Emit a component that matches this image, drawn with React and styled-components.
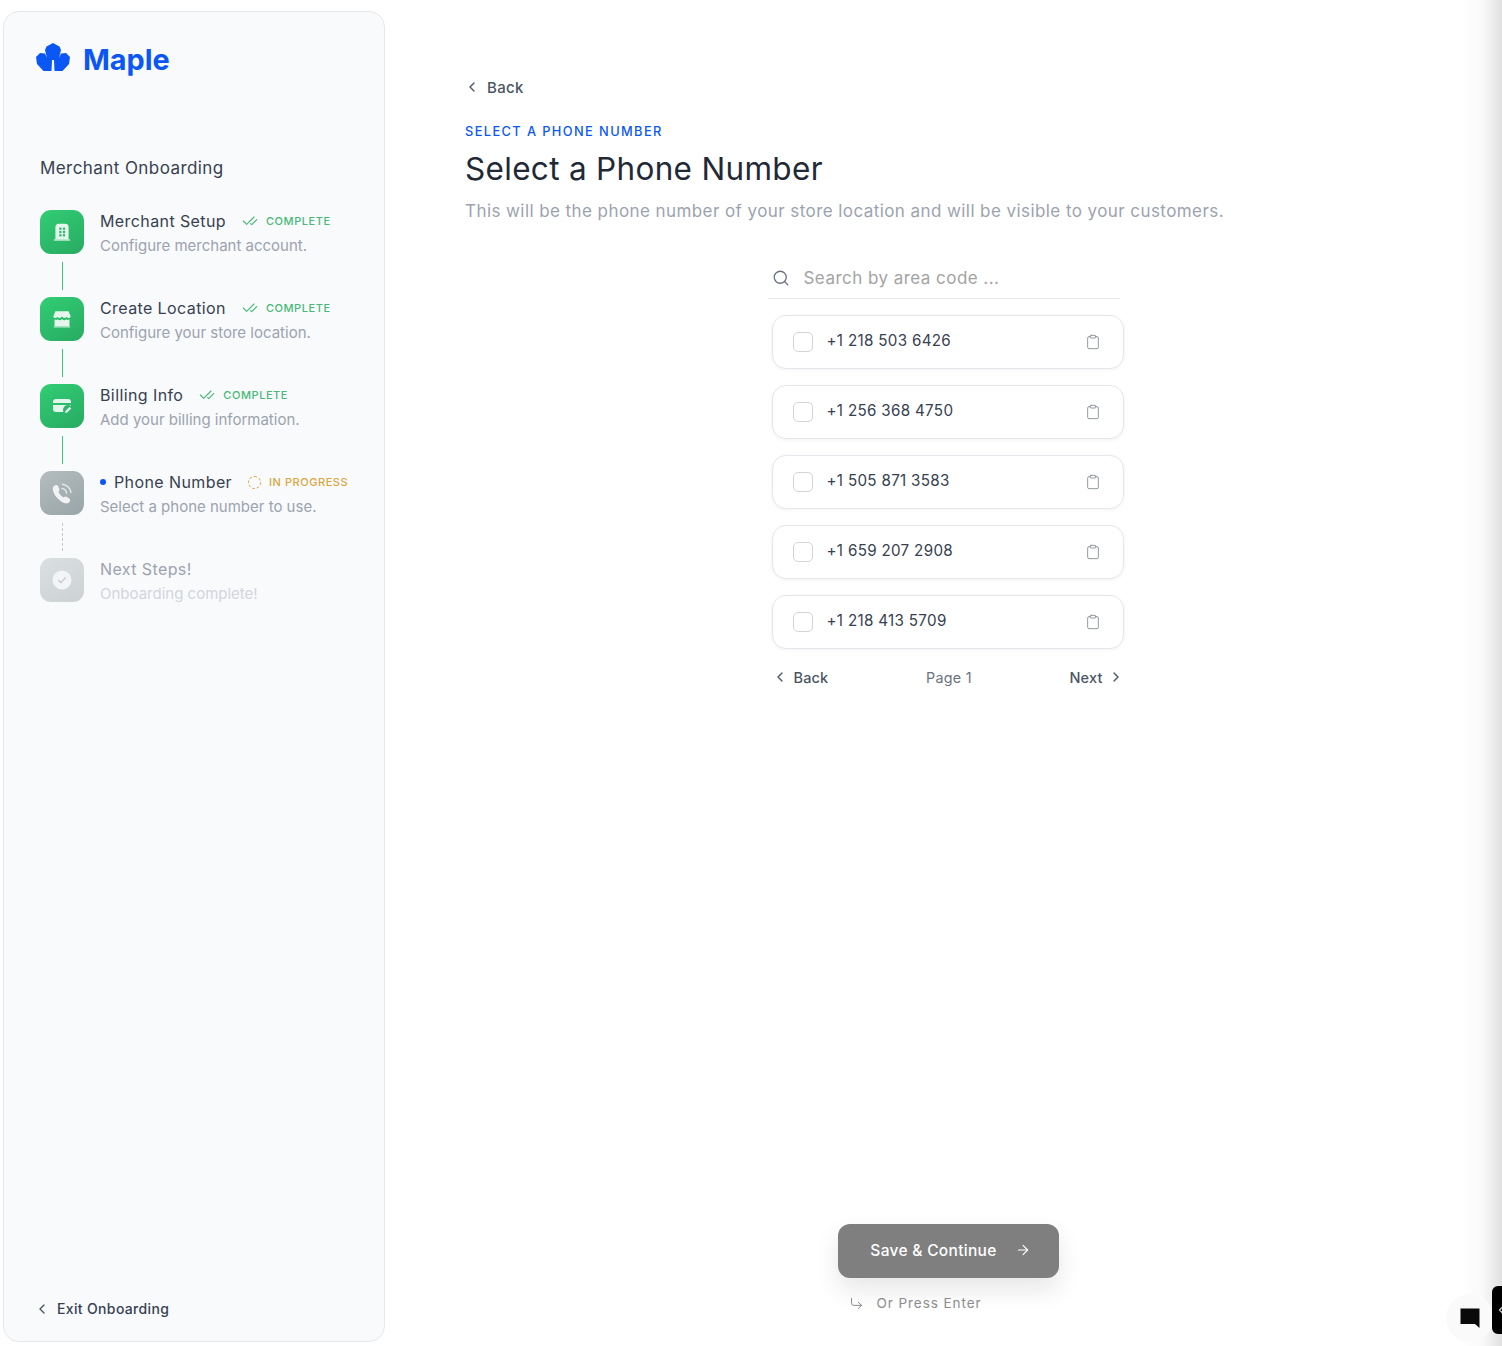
import React from "react";
import styled, { createGlobalStyle } from "styled-components";
import { ArrowRight, CheckCheck, ChevronLeft, ChevronRight, Clipboard, CornerDownRight, Search } from "lucide-react";

const GlobalStyle = createGlobalStyle`
  * { box-sizing: border-box; }
  html, body { margin: 0; background: #fff; }
  body { font-family: Inter, "Liberation Sans", sans-serif; overflow: hidden; }
`;

const Page = styled.div`
  display: flex;
  height: 1346px;
  padding: 11px 0 4px 3px;
`;

const Sidebar = styled.aside`
  width: 382px;
  flex: none;
  display: flex;
  flex-direction: column;
  padding: 30px 0 24px 36px;
  background: #f9fafc;
  border: 1px solid #e5e7eb;
  border-radius: 16px;
`;

const Logo = styled.div`
  display: flex;
  align-items: center;
  gap: 13px;
  margin-left: -4px;
  height: 34px;
  color: #0b57f5;
  font-size: 28.8px;
  font-weight: 700;
  svg { margin-top: -3px; }
`;

const OnboardingTitle = styled.h2`
  margin: 79px 0 0;
  font-size: 17px;
  line-height: 26px;
  font-weight: 400;
  letter-spacing: 0.025em;
  color: #374151;
`;

const Steps = styled.div`
  margin-top: 29px;
  display: flex;
  flex-direction: column;
  flex: 1;
`;

const Step = styled.div`
  display: flex;
  gap: 16px;
  height: 44px;
`;

const StepIcon = styled.div`
  width: 44px;
  height: 44px;
  flex: none;
  display: flex;
  align-items: center;
  justify-content: center;
  border-radius: 11px;
  background: ${(p) =>
    p.$kind === "done"
      ? "linear-gradient(150deg, #32cd74, #27ab62)"
      : p.$kind === "active"
      ? "linear-gradient(150deg, #b4bcbf, #99a5a8)"
      : "linear-gradient(150deg, #dadfe1, #ccd2d4)"};
`;

const StepText = styled.div`
  display: flex;
  flex-direction: column;
  padding-top: 1px;
`;

const StepHead = styled.div`
  display: flex;
  align-items: center;
  height: 24px;
`;

const StepName = styled.span`
  font-size: 16px;
  letter-spacing: 0.025em;
  color: ${(p) => (p.$muted ? "#9ca3af" : "#374151")};
`;

const ActiveDot = styled.span`
  width: 6px;
  height: 6px;
  margin-right: 8px;
  border-radius: 50%;
  background: #0b57f5;
`;

const StepStatus = styled.span`
  display: flex;
  align-items: center;
  gap: 8px;
  margin-left: 16px;
  font-size: 11px;
  font-weight: 500;
  letter-spacing: 0.05em;
  color: ${(p) => (p.$progress ? "#d9a63c" : "#48b978")};
`;

const ProgressRing = styled.span`
  width: 13px;
  height: 13px;
  border: 1.5px dashed #d9a63c;
  border-radius: 50%;
`;

const StepDesc = styled.span`
  margin-top: 3px;
  font-size: 15px;
  line-height: 24px;
  color: ${(p) => (p.$muted ? "#d1d5db" : "#9ca3af")};
`;

const Connector = styled.div`
  height: 28px;
  margin: 8px 0 7px 22px;
  width: 0;
  border-left: 1px ${(p) => (p.$dashed ? "dashed #c4c9ce" : "solid #32cd74")};
`;

const ExitLink = styled.a`
  display: flex;
  align-items: center;
  gap: 7px;
  margin-left: -6px;
  color: #374151;
  font-size: 14px;
  font-weight: 500;
  letter-spacing: 0.025em;
  svg { color: #4b5563; }
`;

const Main = styled.main`
  flex: 1;
  min-width: 0;
  display: flex;
  flex-direction: column;
  padding: 66px 70px 0 80px;
`;

const BackLink = styled.a`
  display: flex;
  align-items: center;
  gap: 7px;
  height: 20px;
  margin-left: -1px;
  color: #4b5563;
  font-size: 15px;
  font-weight: 500;
  letter-spacing: 0.02em;
`;

const Eyebrow = styled.div`
  margin-top: 27px;
  color: #0b57f5;
  font-size: 12.8px;
  line-height: 16px;
  font-weight: 500;
  letter-spacing: 0.11em;
`;

const Title = styled.h1`
  margin: 8px 0 0;
  color: #1f2937;
  font-size: 31.5px;
  line-height: 42px;
  font-weight: 400;
  letter-spacing: 0.01em;
`;

const Subtitle = styled.p`
  margin: 9px 0 0;
  color: #9ca3af;
  font-size: 17px;
  line-height: 24px;
  letter-spacing: 0.025em;
`;

const Picker = styled.section`
  align-self: center;
  width: 352px;
  margin: 32px 2px 0 0;
`;

const SearchBar = styled.div`
  display: flex;
  align-items: center;
  gap: 14px;
  width: 352px;
  height: 44px;
  margin-left: -4px;
  padding: 2px 0 0 4px;
  border-bottom: 1px solid #e5e7eb;
  color: #6b7280;
`;

const SearchHint = styled.span`
  color: #a3a3a3;
  font-size: 17px;
  letter-spacing: 0.027em;
`;

const NumberList = styled.div`
  margin-top: 16px;
  display: flex;
  flex-direction: column;
  gap: 16px;
`;

const NumberRow = styled.div`
  display: flex;
  align-items: center;
  height: 54px;
  padding: 0 22px 0 20px;
  border: 1px solid #e5e7eb;
  border-radius: 14px;
  background: #fff;
  box-shadow: 0 1px 4px rgba(17, 24, 39, 0.05);
`;

const Check = styled.span`
  width: 20px;
  height: 20px;
  flex: none;
  border: 1px solid #d1d5db;
  border-radius: 5px;
  background: #fff;
`;

const NumberText = styled.span`
  flex: 1;
  margin: -4px 0 0 14px;
  color: #374151;
  font-size: 15.2px;
  letter-spacing: 0.02em;
`;

const CopyIcon = styled(Clipboard)`
  color: #8b9199;
`;

const Pager = styled.nav`
  display: flex;
  align-items: center;
  justify-content: space-between;
  height: 20px;
  margin: 18px -1px 0 0;
`;

const PagerLink = styled.a`
  display: flex;
  align-items: center;
  gap: 6px;
  color: #4b5563;
  font-size: 14.5px;
  font-weight: 500;
  letter-spacing: 0.01em;
`;

const PageLabel = styled.span`
  color: #6b7280;
  font-size: 14.3px;
  letter-spacing: 0.02em;
`;

const Footer = styled.div`
  margin-top: auto;
  margin-bottom: 29px;
  align-self: center;
  display: flex;
  flex-direction: column;
  align-items: center;
`;

const SaveButton = styled.button`
  display: flex;
  align-items: center;
  justify-content: center;
  gap: 18px;
  width: 221px;
  height: 54px;
  padding: 0 0 2px 4px;
  border: 0;
  border-radius: 12px;
  background: #7f7f7f;
  box-shadow: 0 12px 24px rgba(17, 24, 39, 0.1);
  color: #fff;
  font-family: inherit;
  font-size: 15.5px;
  font-weight: 500;
  letter-spacing: 0.02em;
`;

const EnterHint = styled.div`
  display: flex;
  align-items: center;
  gap: 12px;
  margin: 15px 0 0 -66px;
  color: #8c8c8c;
  font-size: 13.5px;
  letter-spacing: 0.07em;
  height: 20px;
`;

const EdgeShadow = styled.div`
  position: fixed;
  top: 0;
  right: 0;
  bottom: 0;
  width: 40px;
  background: linear-gradient(to right, rgba(0, 0, 0, 0), rgba(0, 0, 0, 0.02) 50%, rgba(0, 0, 0, 0.12));
  pointer-events: none;
`;

const ChatBubble = styled.div`
  position: fixed;
  left: 1446px;
  top: 1294px;
  width: 48px;
  height: 48px;
  display: flex;
  align-items: center;
  justify-content: center;
  border-radius: 50%;
  background: #fafafa;
`;

const ChatTab = styled.div`
  position: fixed;
  left: 1492px;
  top: 1286px;
  width: 20px;
  height: 48px;
  display: flex;
  align-items: center;
  padding-left: 3px;
  border-radius: 6px;
  background: #000;
  color: #d8d8d8;
`;

const MapleMark = () => (
  <svg width="34" height="29" viewBox="0 0 34 29" fill="#0b57f5">
    <path d="M17 0 23.5 3.5 25 7 23 15 25 10.5 30 10 34 14 33 21 26.5 28 18.5 28 18 17H16L15.5 28 7.5 28 1 21 0 14 4 10 9 10.5 11 15 9 7 10.5 3.5Z" />
  </svg>
);

const BuildingGlyph = () => (
  <svg width="22" height="22" viewBox="0 0 20 20">
    <path d="M4 17V5.5C4 3.6 5.4 2.5 7 2.5H13C14.6 2.5 16 3.6 16 5.5V17Z" fill="#e4f6ec" />
    <rect x="2.5" y="16.5" width="15" height="1.5" rx=".5" fill="#bfe9d1" />
    <g fill="#2bb56a">
      <rect x="7.5" y="6" width="2" height="2" /><rect x="10.8" y="6" width="2" height="2" />
      <rect x="7.5" y="9" width="2" height="2" /><rect x="10.8" y="9" width="2" height="2" />
      <rect x="7.5" y="12" width="2" height="2" /><rect x="10.8" y="12" width="2" height="2" />
    </g>
  </svg>
);

const StoreGlyph = () => (
  <svg width="22" height="22" viewBox="0 0 20 20">
    <path d="M4 3H16L18 8C17 9.5 15 9.5 14 8 13 9.5 11 9.5 10 7.5 9 9.5 7 9.5 6 8 5 9.5 3 9.5 2 8Z" fill="#e4f6ec" />
    <path d="M3.2 10.5C4.5 11 5.5 11 6 10.3 7.4 11.4 8.8 11.4 10 10 11.2 11.4 12.6 11.4 14 10.3 14.5 11 15.5 11 16.8 10.5V16.5H3.2Z" fill="#e4f6ec" />
    <rect x="2.5" y="16.5" width="15" height="1.3" rx=".5" fill="#bfe9d1" />
  </svg>
);

const CardGlyph = () => (
  <svg width="24" height="20" viewBox="0 0 24 20">
    <path d="M3 6C3 4 4 3 6 3H18C20 3 21 4 21 6V7H3Z" fill="#e4f6ec" />
    <path d="M3 9H21V11L15.5 16H6C4 16 3 15 3 13Z" fill="#e4f6ec" />
    <circle cx="18" cy="14" r="5" fill="#2bb56a" />
    <path d="M15 17 15.6 14.8 19.6 10.8 21.3 12.5 17.2 16.5Z" fill="#e4f6ec" />
  </svg>
);

const PhoneGlyph = () => (
  <svg width="25" height="25" viewBox="0 0 22 22" fill="none">
    <path d="M3.5 4.5C4.5 3.4 6.4 3.2 7 4.5L8.2 7C8.6 7.8 8.2 8.6 7.4 9.2 8 11 10.2 13.6 12.2 14.5 12.9 13.6 13.9 13.4 14.6 13.9L17 15.5C18 16.2 18 17.6 17 18.6 15.6 20 13.4 20 11 18.6 6.5 16 2.8 11.4 2.5 7.2 2.4 6 2.8 5.2 3.5 4.5Z" fill="#f1f3f4" />
    <path d="M10.5 6.5C12.5 6.8 14.2 8.4 14.6 10.6M11 2.8C14.6 3.2 17.8 6.2 18.4 10" stroke="#e6e9ea" strokeWidth="1.3" strokeLinecap="round" />
  </svg>
);

const DoneGlyph = () => (
  <svg width="20" height="20" viewBox="0 0 20 20">
    <circle cx="10" cy="10" r="9.5" fill="#f3f4f5" />
    <path d="M6.5 10.2 9 12.6 13.5 7.8" fill="none" stroke="#c9ced1" strokeWidth="1.5" strokeLinecap="round" strokeLinejoin="round" />
  </svg>
);

const ChatGlyph = () => (
  <svg width="22" height="22" viewBox="0 0 22 22">
    <path d="M1.5 1.5H20.5V21L16 17H1.5Z" fill="#0a0a0a" />
  </svg>
);

const Complete = () => (
  <StepStatus>
    <CheckCheck size={16} strokeWidth={1.7} />
    COMPLETE
  </StepStatus>
);

const numbers = ["+1 218 503 6426", "+1 256 368 4750", "+1 505 871 3583", "+1 659 207 2908", "+1 218 413 5709"];

export default function App() {
  return (
    <Page>
      <GlobalStyle />
      <Sidebar>
        <Logo>
          <MapleMark />
          Maple
        </Logo>
        <OnboardingTitle>Merchant Onboarding</OnboardingTitle>
        <Steps>
          <Step>
            <StepIcon $kind="done"><BuildingGlyph /></StepIcon>
            <StepText>
              <StepHead><StepName>Merchant Setup</StepName><Complete /></StepHead>
              <StepDesc>Configure merchant account.</StepDesc>
            </StepText>
          </Step>
          <Connector />
          <Step>
            <StepIcon $kind="done"><StoreGlyph /></StepIcon>
            <StepText>
              <StepHead><StepName>Create Location</StepName><Complete /></StepHead>
              <StepDesc>Configure your store location.</StepDesc>
            </StepText>
          </Step>
          <Connector />
          <Step>
            <StepIcon $kind="done"><CardGlyph /></StepIcon>
            <StepText>
              <StepHead><StepName>Billing Info</StepName><Complete /></StepHead>
              <StepDesc>Add your billing information.</StepDesc>
            </StepText>
          </Step>
          <Connector />
          <Step>
            <StepIcon $kind="active"><PhoneGlyph /></StepIcon>
            <StepText>
              <StepHead>
                <ActiveDot />
                <StepName>Phone Number</StepName>
                <StepStatus $progress><ProgressRing />IN PROGRESS</StepStatus>
              </StepHead>
              <StepDesc>Select a phone number to use.</StepDesc>
            </StepText>
          </Step>
          <Connector $dashed />
          <Step>
            <StepIcon><DoneGlyph /></StepIcon>
            <StepText>
              <StepHead><StepName $muted>Next Steps!</StepName></StepHead>
              <StepDesc $muted>Onboarding complete!</StepDesc>
            </StepText>
          </Step>
        </Steps>
        <ExitLink><ChevronLeft size={16} strokeWidth={2} />Exit Onboarding</ExitLink>
      </Sidebar>
      <Main>
        <BackLink><ChevronLeft size={16} strokeWidth={2} />Back</BackLink>
        <Eyebrow>SELECT A PHONE NUMBER</Eyebrow>
        <Title>Select a Phone Number</Title>
        <Subtitle>This will be the phone number of your store location and will be visible to your customers.</Subtitle>
        <Picker>
          <SearchBar>
            <Search size={18} strokeWidth={1.7} />
            <SearchHint>Search by area code ...</SearchHint>
          </SearchBar>
          <NumberList>
            {numbers.map((n) => (
              <NumberRow key={n}>
                <Check />
                <NumberText>{n}</NumberText>
                <CopyIcon size={16} strokeWidth={1.4} />
              </NumberRow>
            ))}
          </NumberList>
          <Pager>
            <PagerLink><ChevronLeft size={16} strokeWidth={2} />Back</PagerLink>
            <PageLabel>Page 1</PageLabel>
            <PagerLink>Next<ChevronRight size={16} strokeWidth={2} /></PagerLink>
          </Pager>
        </Picker>
        <Footer>
          <SaveButton>Save &amp; Continue<ArrowRight size={16} strokeWidth={1.6} /></SaveButton>
          <EnterHint><CornerDownRight size={15} strokeWidth={1.6} />Or Press Enter</EnterHint>
        </Footer>
      </Main>
      <EdgeShadow />
      <ChatBubble><ChatGlyph /></ChatBubble>
      <ChatTab><ChevronLeft size={12} strokeWidth={2.4} /></ChatTab>
    </Page>
  );
}
